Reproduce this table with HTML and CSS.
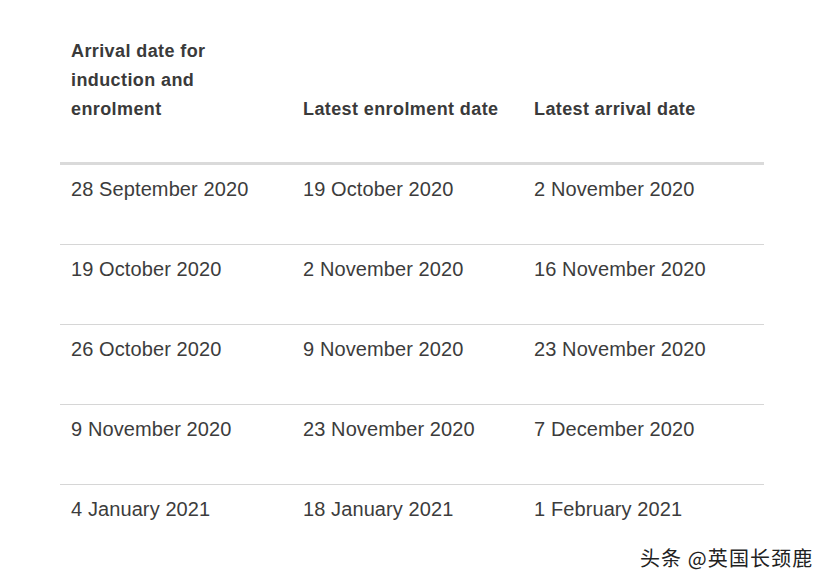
FILE: index.html
```html
<!DOCTYPE html>
<html lang="en">
<head>
<meta charset="utf-8">
<title>Arrival dates</title>
<link rel="stylesheet" href="styles.css">
</head>
<body>
<div class="page">
  <div class="table">
    <div class="row head">
      <div class="cell">Arrival date for<br>induction and<br>enrolment</div>
      <div class="cell">Latest enrolment date</div>
      <div class="cell">Latest arrival date</div>
    </div>
    <div class="row">
      <div class="cell">28 September 2020</div>
      <div class="cell">19 October 2020</div>
      <div class="cell">2 November 2020</div>
    </div>
    <div class="row">
      <div class="cell">19 October 2020</div>
      <div class="cell">2 November 2020</div>
      <div class="cell">16 November 2020</div>
    </div>
    <div class="row">
      <div class="cell">26 October 2020</div>
      <div class="cell">9 November 2020</div>
      <div class="cell">23 November 2020</div>
    </div>
    <div class="row">
      <div class="cell">9 November 2020</div>
      <div class="cell">23 November 2020</div>
      <div class="cell">7 December 2020</div>
    </div>
    <div class="row last">
      <div class="cell">4 January 2021</div>
      <div class="cell">18 January 2021</div>
      <div class="cell">1 February 2021</div>
    </div>
  </div>
  <div class="watermark">头条 @英国长颈鹿</div>
</div>
</body>
</html>
```
FILE: styles.css
```css
html, body {
  margin: 0;
  padding: 0;
  background: #ffffff;
}
.page {
  position: relative;
  width: 828px;
  height: 587px;
  overflow: hidden;
  font-family: "Liberation Sans", Arial, sans-serif;
}
.table {
  margin-left: 60px;
  width: 704px;
  padding-top: 37px;
}
.row {
  display: grid;
  grid-template-columns: 232px 231px 1fr;
  border-bottom: 1px solid #d6d6d6;
}
.row .cell {
  padding: 12px 0 43px 11px;
  font-size: 20px;
  line-height: 24px;
  letter-spacing: 0.1px;
  color: #3c3c3c;
}
.row.head {
  border-bottom: 3px solid #dadada;
  align-items: end;
}
.row.head .cell {
  padding: 0 0 38px 11px;
  font-size: 18px;
  line-height: 29px;
  font-weight: bold;
  letter-spacing: 0.4px;
  color: #3a3a3a;
}
.row.last {
  border-bottom: none;
}
.watermark {
  position: absolute;
  left: 640px;
  top: 545px;
  font-family: "Noto Sans CJK SC", "Noto Sans", sans-serif;
  font-size: 20px;
  line-height: 26px;
  letter-spacing: 1.1px;
  color: #222222;
  text-shadow: 0 0 2px #ffffff, 0 0 2px #ffffff;
}
```
